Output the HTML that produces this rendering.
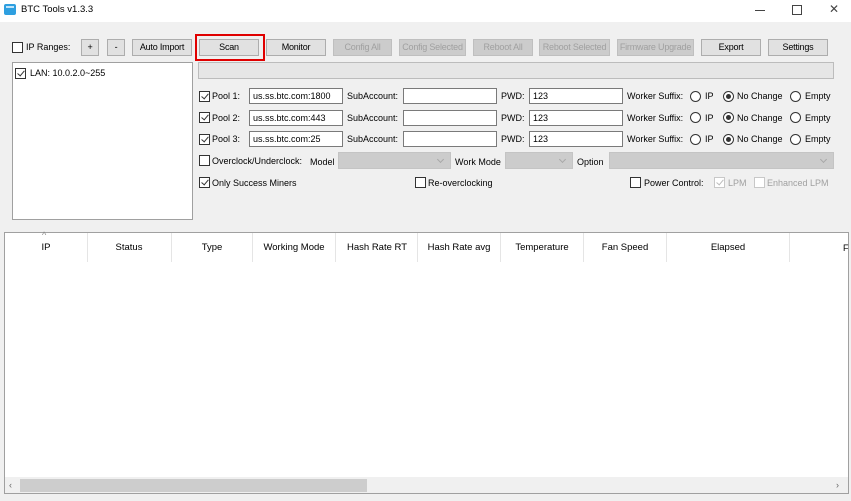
<!DOCTYPE html>
<html><head><meta charset="utf-8"><style>
*{box-sizing:border-box;margin:0;padding:0}
body{width:851px;height:501px;background:#f0f0f0;font-family:"Liberation Sans",sans-serif;font-size:9px;color:#000;position:relative;overflow:hidden}
.a{position:absolute;white-space:nowrap}
.t{position:absolute;white-space:nowrap;line-height:12px}
.btn{position:absolute;height:17px;background:#e1e1e1;border:1px solid #adadad;text-align:center;line-height:15px;font-size:9px;white-space:nowrap;overflow:hidden;letter-spacing:-0.2px}
.dis{color:#a0a0a0;background:#cccccc;border-color:#bfbfbf}
.cb{position:absolute;width:11px;height:11px;border:1px solid #333;background:#fff}
.cb.on::after{content:"";position:absolute;left:3px;top:0px;width:3px;height:6px;border:solid #333;border-width:0 1px 1px 0;transform:rotate(40deg)}
.cb.g{border-color:#c8c8c8}.cb.g::after{border-color:#bbb}
.in{position:absolute;height:16px;background:#fff;border:1px solid #7a7a7a;padding-left:3px;line-height:14px}
.sel{position:absolute;height:17px;background:#cccccc;border:1px solid #c4c4c4}
.sel::after{content:"";position:absolute;right:7px;top:4px;width:4px;height:4px;border:solid #a8a8a8;border-width:0 1px 1px 0;transform:rotate(45deg)}
.rd{position:absolute;width:11px;height:11px;border:1px solid #333;border-radius:50%;background:#fff}
.rd.on::after{content:"";position:absolute;left:2px;top:2px;width:5px;height:5px;border-radius:50%;background:#333}
.h{position:absolute;top:242px;width:0;text-align:center;white-space:nowrap;display:flex;justify-content:center;font-size:9.5px}
.d{position:absolute;top:233px;width:1px;height:29px;background:#e5e5e5}
</style></head><body>
<div class="a" style="left:0;top:0;width:851px;height:22px;background:#fff"></div>
<div class="a" style="left:4px;top:4px;width:12px;height:11px;background:#2e9fe0;border-radius:2px"></div>
<div class="a" style="left:6px;top:6px;width:8px;height:2px;background:#bfe4fa"></div>
<div class="t" style="left:21px;top:4px;font-size:9.5px">BTC Tools v1.3.3</div>
<div class="a" style="left:755px;top:10px;width:10px;height:1px;background:#444"></div>
<div class="a" style="left:792px;top:5px;width:10px;height:10px;border:1px solid #444"></div>
<div class="t" style="left:829px;top:3px;font-size:12px;color:#444">✕</div>

<div class="cb" style="left:12px;top:42px"></div>
<div class="t" style="left:26px;top:41px">IP Ranges:</div>
<div class="btn" style="left:81px;top:39px;width:18px">+</div>
<div class="btn" style="left:107px;top:39px;width:18px">-</div>
<div class="btn" style="left:132px;top:39px;width:60px">Auto Import</div>
<div class="btn" style="left:199px;top:39px;width:60px">Scan</div>
<div class="a" style="left:195px;top:34px;width:70px;height:27px;border:2px solid #e00000"></div>
<div class="btn" style="left:266px;top:39px;width:60px">Monitor</div>
<div class="btn dis" style="left:333px;top:39px;width:59px">Config All</div>
<div class="btn dis" style="left:399px;top:39px;width:67px">Config Selected</div>
<div class="btn dis" style="left:473px;top:39px;width:60px">Reboot All</div>
<div class="btn dis" style="left:539px;top:39px;width:71px">Reboot Selected</div>
<div class="btn dis" style="left:617px;top:39px;width:77px">Firmware Upgrade</div>
<div class="btn" style="left:701px;top:39px;width:60px">Export</div>
<div class="btn" style="left:768px;top:39px;width:60px">Settings</div>

<div class="a" style="left:12px;top:62px;width:181px;height:158px;background:#fff;border:1px solid #a0a0a0"></div>
<div class="cb on" style="left:15px;top:68px"></div>
<div class="t" style="left:30px;top:67px">LAN: 10.0.2.0~255</div>
<div class="a" style="left:198px;top:62px;width:636px;height:17px;background:#e6e6e6;border:1px solid #bcbcbc"></div>

<div class="cb on" style="left:199px;top:91px"></div><div class="t" style="left:212px;top:90px">Pool 1:</div>
<div class="in" style="left:249px;top:88px;width:94px">us.ss.btc.com:1800</div>
<div class="cb on" style="left:199px;top:112px"></div><div class="t" style="left:212px;top:112px">Pool 2:</div>
<div class="in" style="left:249px;top:110px;width:94px">us.ss.btc.com:443</div>
<div class="cb on" style="left:199px;top:134px"></div><div class="t" style="left:212px;top:133px">Pool 3:</div>
<div class="in" style="left:249px;top:131px;width:94px">us.ss.btc.com:25</div>

<div class="t" style="left:347px;top:90px">SubAccount:</div><div class="in" style="left:403px;top:88px;width:94px"></div>
<div class="t" style="left:347px;top:112px">SubAccount:</div><div class="in" style="left:403px;top:110px;width:94px"></div>
<div class="t" style="left:347px;top:133px">SubAccount:</div><div class="in" style="left:403px;top:131px;width:94px"></div>

<div class="t" style="left:501px;top:90px">PWD:</div><div class="in" style="left:529px;top:88px;width:94px">123</div>
<div class="t" style="left:501px;top:112px">PWD:</div><div class="in" style="left:529px;top:110px;width:94px">123</div>
<div class="t" style="left:501px;top:133px">PWD:</div><div class="in" style="left:529px;top:131px;width:94px">123</div>

<div class="t" style="left:627px;top:90px">Worker Suffix:</div>
<div class="rd" style="left:690px;top:91px"></div><div class="t" style="left:705px;top:90px">IP</div>
<div class="rd on" style="left:723px;top:91px"></div><div class="t" style="left:737px;top:90px">No Change</div>
<div class="rd" style="left:790px;top:91px"></div><div class="t" style="left:805px;top:90px">Empty</div>
<div class="t" style="left:627px;top:112px">Worker Suffix:</div>
<div class="rd" style="left:690px;top:112px"></div><div class="t" style="left:705px;top:112px">IP</div>
<div class="rd on" style="left:723px;top:112px"></div><div class="t" style="left:737px;top:112px">No Change</div>
<div class="rd" style="left:790px;top:112px"></div><div class="t" style="left:805px;top:112px">Empty</div>
<div class="t" style="left:627px;top:133px">Worker Suffix:</div>
<div class="rd" style="left:690px;top:134px"></div><div class="t" style="left:705px;top:133px">IP</div>
<div class="rd on" style="left:723px;top:134px"></div><div class="t" style="left:737px;top:133px">No Change</div>
<div class="rd" style="left:790px;top:134px"></div><div class="t" style="left:805px;top:133px">Empty</div>

<div class="cb" style="left:199px;top:155px"></div><div class="t" style="left:212px;top:155px">Overclock/Underclock:</div>
<div class="t" style="left:310px;top:156px">Model</div>
<div class="sel" style="left:338px;top:152px;width:113px"></div>
<div class="t" style="left:455px;top:156px">Work Mode</div>
<div class="sel" style="left:505px;top:152px;width:68px"></div>
<div class="t" style="left:577px;top:156px">Option</div>
<div class="sel" style="left:609px;top:152px;width:225px"></div>

<div class="cb on" style="left:199px;top:177px"></div><div class="t" style="left:212px;top:177px">Only Success Miners</div>
<div class="cb" style="left:415px;top:177px"></div><div class="t" style="left:428px;top:177px">Re-overclocking</div>
<div class="cb" style="left:630px;top:177px"></div><div class="t" style="left:644px;top:177px">Power Control:</div>
<div class="cb on g" style="left:714px;top:177px"></div><div class="t" style="left:728px;top:177px;color:#a0a0a0">LPM</div>
<div class="cb g" style="left:754px;top:177px"></div><div class="t" style="left:767px;top:177px;color:#a0a0a0">Enhanced LPM</div>

<div class="a" style="left:4px;top:232px;width:845px;height:262px;background:#fff;border:1px solid #a0a0a0"></div>
<div class="t" style="left:42px;top:229px;font-size:9px;color:#888">^</div>
<div class="d" style="left:87px"></div><div class="d" style="left:171px"></div><div class="d" style="left:252px"></div><div class="d" style="left:335px"></div><div class="d" style="left:417px"></div><div class="d" style="left:500px"></div><div class="d" style="left:583px"></div><div class="d" style="left:666px"></div><div class="d" style="left:789px"></div>
<div class="h" style="left:46px">IP</div>
<div class="h" style="left:129px">Status</div>
<div class="h" style="left:212px">Type</div>
<div class="h" style="left:294px">Working Mode</div>
<div class="h" style="left:377px">Hash Rate RT</div>
<div class="h" style="left:459px">Hash Rate avg</div>
<div class="h" style="left:542px">Temperature</div>
<div class="h" style="left:625px">Fan Speed</div>
<div class="h" style="left:728px">Elapsed</div>
<div class="t" style="left:843px;top:242px">F</div>
<div class="a" style="left:5px;top:477px;width:843px;height:16px;background:#f0f0f0"></div>
<div class="a" style="left:20px;top:479px;width:347px;height:13px;background:#cdcdcd"></div>
<div class="t" style="left:9px;top:479px;color:#666;font-size:9px">‹</div>
<div class="t" style="left:836px;top:479px;color:#666;font-size:9px">›</div>
</body></html>
